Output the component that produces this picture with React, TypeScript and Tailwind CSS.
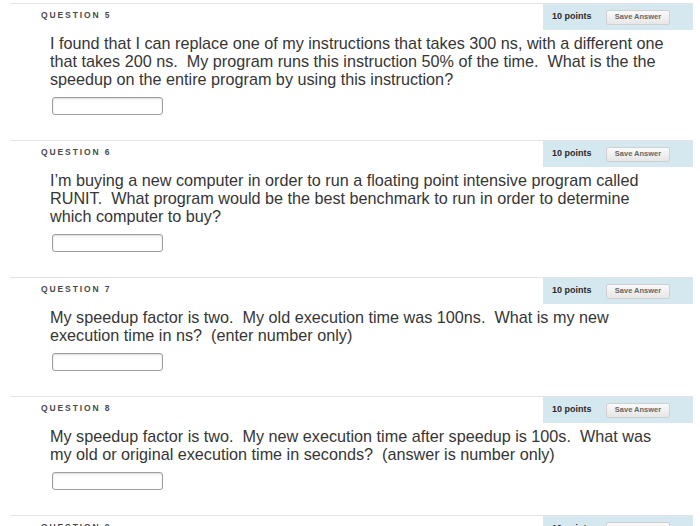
import React from "react";

type Question = {
    num: number;
    lines: string[];
};

const questions: Question[] = [
    {
        num: 5,
        lines: [
            "I found that I can replace one of my instructions that takes 300 ns, with a different one",
            "that takes 200 ns.  My program runs this instruction 50% of the time.  What is the the",
            "speedup on the entire program by using this instruction?",
        ],
    },
    {
        num: 6,
        lines: [
            "I\u2019m buying a new computer in order to run a floating point intensive program called",
            "RUNIT.  What program would be the best benchmark to run in order to determine",
            "which computer to buy?",
        ],
    },
    {
        num: 7,
        lines: [
            "My speedup factor is two.  My old execution time was 100ns.  What is my new",
            "execution time in ns?  (enter number only)",
        ],
    },
    {
        num: 8,
        lines: [
            "My speedup factor is two.  My new execution time after speedup is 100s.  What was",
            "my old or original execution time in seconds?  (answer is number only)",
        ],
    },
];

function QuestionHeader({ num }: { num: number }) {
    return (
        <div className="flex h-[26px] items-start border-t border-[#e3e3e3]">
            <div className="flex-1 pl-[31px] pt-[5px] text-[8.5px] font-bold tracking-[1.9px] text-[#4a4a4a]">
                QUESTION {num}
            </div>
            <div className="flex h-[26px] w-[150px] items-center bg-[#d5e8f0] pl-[9px]">
                <span className="w-[41px] whitespace-nowrap text-[9px] font-bold text-[#2a2a2a]">10 points</span>
                <button className="ml-[13px] h-[15px] w-[64px] rounded-[2px] border border-[#d0d0d0] bg-gradient-to-b from-[#fafafa] to-[#e6e6e6] text-[7.5px] font-bold text-[#666]">
                    Save Answer
                </button>
            </div>
        </div>
    );
}

function QuestionBlock({ q }: { q: Question }) {
    return (
        <div className="pb-[25px]">
            <QuestionHeader num={q.num} />
            <div className="pl-[40px] pt-[5px] text-[16.2px] leading-[18px] text-[#363636]">
                {q.lines.map((line) => (
                    <div key={line} className="whitespace-pre">
                        {line}
                    </div>
                ))}
            </div>
            <div className="ml-[42px] mt-[9px] h-[18px] w-[111px] rounded-[3px] border border-[#9e9e9e] bg-white shadow-[inset_0_1px_2px_rgba(0,0,0,0.15)]" />
        </div>
    );
}

export default function App() {
    return (
        <div className="h-[526px] w-[700px] overflow-hidden bg-white font-['Liberation_Sans',Arial,sans-serif]">
            <div className="ml-[10px] mr-[7px] pt-[3px]">
                {questions.map((q) => (
                    <QuestionBlock key={q.num} q={q} />
                ))}
                <QuestionHeader num={9} />
            </div>
        </div>
    );
}
